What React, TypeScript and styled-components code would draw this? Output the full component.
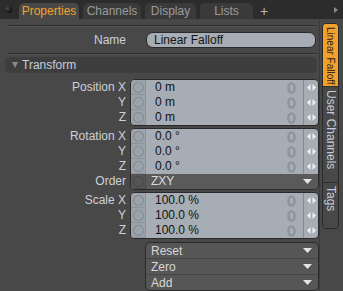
import styled, { createGlobalStyle } from "styled-components";

const GlobalStyle = createGlobalStyle`
  html, body {
    margin: 0;
    padding: 0;
    background: #484848;
  }
  body {
    font-family: "Liberation Sans", Arial, sans-serif;
    font-size: 11px;
  }
`;

type FieldRow = { label: string; value: string };

const position: FieldRow[] = [
  { label: "Position X", value: "0 m" },
  { label: "Y", value: "0 m" },
  { label: "Z", value: "0 m" },
];

const rotation: FieldRow[] = [
  { label: "Rotation X", value: "0.0 °" },
  { label: "Y", value: "0.0 °" },
  { label: "Z", value: "0.0 °" },
];

const scale: FieldRow[] = [
  { label: "Scale X", value: "100.0 %" },
  { label: "Y", value: "100.0 %" },
  { label: "Z", value: "100.0 %" },
];

const tabs = [
  { name: "Properties", width: 60, active: true },
  { name: "Channels", width: 58 },
  { name: "Display", width: 51 },
  { name: "Lists", width: 53 },
];

function SpinIcon() {
  return (
    <svg width="9" height="9" viewBox="0 0 9 9">
      <polygon points="0,4.5 3.5,1 3.5,8" fill="#eef0f2" />
      <polygon points="9,4.5 5.5,1 5.5,8" fill="#eef0f2" />
    </svg>
  );
}

// reset-to-zero marker, drawn faint as in the reference
function ZeroIcon() {
  return (
    <svg width="9" height="12" viewBox="0 0 9 12">
      <ellipse cx="4.5" cy="6" rx="3.1" ry="4.6" fill="none" stroke="#8d949b" strokeWidth="2.4" />
    </svg>
  );
}

function DropIcon() {
  return (
    <svg width="9" height="5" viewBox="0 0 9 5">
      <polygon points="0,0 9,0 4.5,5" fill="#e6e6e6" />
    </svg>
  );
}

function NumberRow({ value }: { value: string }) {
  return (
    <Row>
      <Pin>
        <Circle />
      </Pin>
      <Value>{value}</Value>
      <Ghost>
        <ZeroIcon />
      </Ghost>
      <Spin>
        <SpinIcon />
      </Spin>
    </Row>
  );
}

function FieldGroup({ rows, extra }: { rows: FieldRow[]; extra?: string }) {
  return (
    <Group>
      <Labels>
        {rows.map((r, i) => (
          <Label key={i}>{r.label}</Label>
        ))}
        {extra && <Label>Order</Label>}
      </Labels>
      <Box>
        {rows.map((r, i) => (
          <NumberRow key={i} value={r.value} />
        ))}
        {extra && (
          <Row $dark>
            <Pin $dark>
              <Circle $dark />
            </Pin>
            <ChoiceText>{extra}</ChoiceText>
            <Drop>
              <DropIcon />
            </Drop>
          </Row>
        )}
      </Box>
    </Group>
  );
}

export default function App() {
  return (
    <Frame>
      <GlobalStyle />
      <TabBar>
        <Dot />
        {tabs.map((t) => (
          <Tab key={t.name} $active={t.active} $width={t.width}>
            {t.name}
          </Tab>
        ))}
        <Plus>+</Plus>
        <Spacer />
        <MoreArrow />
      </TabBar>
      <Body>
        <Main>
          <Divider />
          <NameRow>
            <NameLabel>Name</NameLabel>
            <NameField>Linear Falloff</NameField>
          </NameRow>
          <Divider />
          <Header>
            <HeaderArrow />
            Transform
          </Header>
          <Groups>
            <FieldGroup rows={position} />
            <FieldGroup rows={rotation} extra="ZXY" />
            <FieldGroup rows={scale} />
            <Actions>
              {["Reset", "Zero", "Add"].map((a) => (
                <Action key={a}>
                  <span>{a}</span>
                  <DropIcon />
                </Action>
              ))}
            </Actions>
          </Groups>
        </Main>
        <Side>
          <SideTabs>
            <SideTab $active $height={63} $size={10}>
              Linear Falloff
            </SideTab>
            <SideTab $height={96} $size={12}>
              User Channels
            </SideTab>
            <SideTab $height={45} $size={12}>
              Tags
            </SideTab>
          </SideTabs>
        </Side>
      </Body>
    </Frame>
  );
}

const Frame = styled.div`
  width: 343px;
  height: 291px;
  overflow: hidden;
  background: #484848;
  display: flex;
  flex-direction: column;
`;

const TabBar = styled.div`
  height: 20px;
  background: #2c2c2c;
  display: flex;
  align-items: flex-end;
  gap: 4px;
  padding-left: 5px;
  box-sizing: border-box;
`;

const Dot = styled.div`
  width: 7px;
  height: 7px;
  border-radius: 50%;
  background: radial-gradient(circle at 35% 35%, #4a4a4a, #111 70%);
  align-self: center;
  margin-right: 3px;
`;

const Tab = styled.div<{ $active?: boolean; $width: number }>`
  width: ${(p) => p.$width}px;
  height: 16px;
  border-radius: 5px 5px 0 0;
  background: ${(p) => (p.$active ? "#484848" : "#3a3a3a")};
  color: ${(p) => (p.$active ? "#f2a12c" : "#9a9a9a")};
  font-size: 12px;
  line-height: 16px;
  text-align: center;
  box-sizing: border-box;
`;

const Plus = styled.div`
  color: #b4b4b4;
  font-size: 14px;
  line-height: 16px;
  height: 16px;
  margin-left: 3px;
`;

const Spacer = styled.div`
  flex: 1;
`;

const MoreArrow = styled.div`
  width: 0;
  height: 0;
  border-top: 3.5px solid transparent;
  border-bottom: 3.5px solid transparent;
  border-left: 4px solid #8a8a8a;
  align-self: center;
  margin-right: 5px;
`;

const Body = styled.div`
  flex: 1;
  display: flex;
`;

const Main = styled.div`
  width: 319px;
  display: flex;
  flex-direction: column;
  padding-top: 6px;
  box-sizing: border-box;
`;

const Divider = styled.div`
  height: 1px;
  margin: 0 2px 0 8px;
  background: #303030;
  box-shadow: 0 1px 0 #525252;
`;

const NameRow = styled.div`
  display: flex;
  align-items: center;
  height: 16px;
  margin: 6px 0 5px;
`;

const NameLabel = styled.div`
  width: 126px;
  text-align: right;
  color: #cdd1d8;
  font-size: 12px;
`;

const NameField = styled.div`
  margin-left: 20px;
  width: 170px;
  height: 16px;
  box-sizing: border-box;
  border: 1px solid #2a2a2a;
  border-radius: 7px;
  background: #a6adb4;
  color: #141414;
  font-size: 12px;
  line-height: 14px;
  padding-left: 7px;
`;

const Header = styled.div`
  margin: 3px 2px 0 5px;
  height: 16px;
  border-radius: 5px;
  background: #3e3e3e;
  color: #c6cddb;
  font-size: 12px;
  line-height: 16px;
  display: flex;
  align-items: center;
  gap: 4px;
  padding-left: 7px;
`;

const HeaderArrow = styled.div`
  width: 0;
  height: 0;
  border-left: 3.5px solid transparent;
  border-right: 3.5px solid transparent;
  border-top: 6px solid #8a8a8a;
`;

const Groups = styled.div`
  display: flex;
  flex-direction: column;
  gap: 2px;
  margin-top: 6px;
`;

const Group = styled.div`
  display: flex;
  gap: 4px;
`;

const Labels = styled.div`
  width: 126px;
  padding-top: 1px;
  display: flex;
  flex-direction: column;
`;

const Label = styled.div`
  height: 15px;
  line-height: 15px;
  text-align: right;
  color: #cdd1d8;
  font-size: 12px;
`;

const Box = styled.div`
  width: 187px;
  border: 1px solid #2a2a2a;
  border-radius: 5px;
  overflow: hidden;
  display: flex;
  flex-direction: column;
`;

const Row = styled.div<{ $dark?: boolean }>`
  height: 15px;
  display: flex;
  align-items: stretch;
  background: ${(p) => (p.$dark ? "#5a5a5a" : "#a6adb4")};
`;

const Pin = styled.div<{ $dark?: boolean }>`
  width: 15px;
  flex: none;
  background: ${(p) => (p.$dark ? "#555555" : "#9ba2a9")};
  border-right: 1px solid ${(p) => (p.$dark ? "#4a4a4a" : "#8c939a")};
  border-bottom: 1px solid ${(p) => (p.$dark ? "#4a4a4a" : "#8c939a")};
  box-sizing: border-box;
  display: flex;
  align-items: center;
  justify-content: center;
`;

const Circle = styled.div<{ $dark?: boolean }>`
  width: 11px;
  height: 11px;
  border-radius: 50%;
  border: 1px solid ${(p) => (p.$dark ? "#474747" : "#80878e")};
  box-sizing: border-box;
`;

const Value = styled.div`
  flex: 1;
  padding-left: 9px;
  color: #111;
  font-size: 12px;
  line-height: 15px;
`;

const Ghost = styled.div`
  width: 16px;
  margin-right: 4px;
  display: flex;
  align-items: center;
  justify-content: center;
`;

const Spin = styled.div`
  width: 14px;
  border-left: 1px solid #848b92;
  display: flex;
  align-items: center;
  justify-content: center;
`;

const ChoiceText = styled.div`
  flex: 1;
  padding-left: 5px;
  color: #dcdcdc;
  font-size: 12px;
  line-height: 15px;
`;

const Drop = styled.div`
  width: 14px;
  margin-right: 4px;
  display: flex;
  align-items: center;
  justify-content: center;
`;

const Actions = styled.div`
  margin: 1px 0 0 145px;
  width: 172px;
  border: 1px solid #2a2a2a;
  border-radius: 5px;
  overflow: hidden;
  background: #565656;
`;

const Action = styled.div`
  height: 15px;
  display: flex;
  align-items: center;
  justify-content: space-between;
  padding: 0 6px 0 5px;
  color: #d8d8d8;
  font-size: 12px;
  border-bottom: 1px solid #454545;
  &:last-child {
    border-bottom: none;
  }
`;

const Side = styled.div`
  flex: 1;
  border-left: 1px solid #3a3a3a;
  padding: 4px 0 0 2px;
`;

const SideTabs = styled.div`
  width: 15px;
  border: 1px solid #2a2a2a;
  border-radius: 4px;
  overflow: hidden;
  display: flex;
  flex-direction: column;
`;

const SideTab = styled.div<{ $active?: boolean; $height: number; $size: number }>`
  height: ${(p) => p.$height}px;
  background: ${(p) => (p.$active ? "#f2a12c" : "#484848")};
  color: ${(p) => (p.$active ? "#1c1c1c" : "#c4cbdc")};
  writing-mode: vertical-rl;
  font-size: ${(p) => p.$size}px;
  line-height: 15px;
  padding-top: 3px;
  box-sizing: border-box;
  white-space: nowrap;
  border-bottom: 1px solid #2e2e2e;
  &:last-child {
    border-bottom: none;
  }
`;
